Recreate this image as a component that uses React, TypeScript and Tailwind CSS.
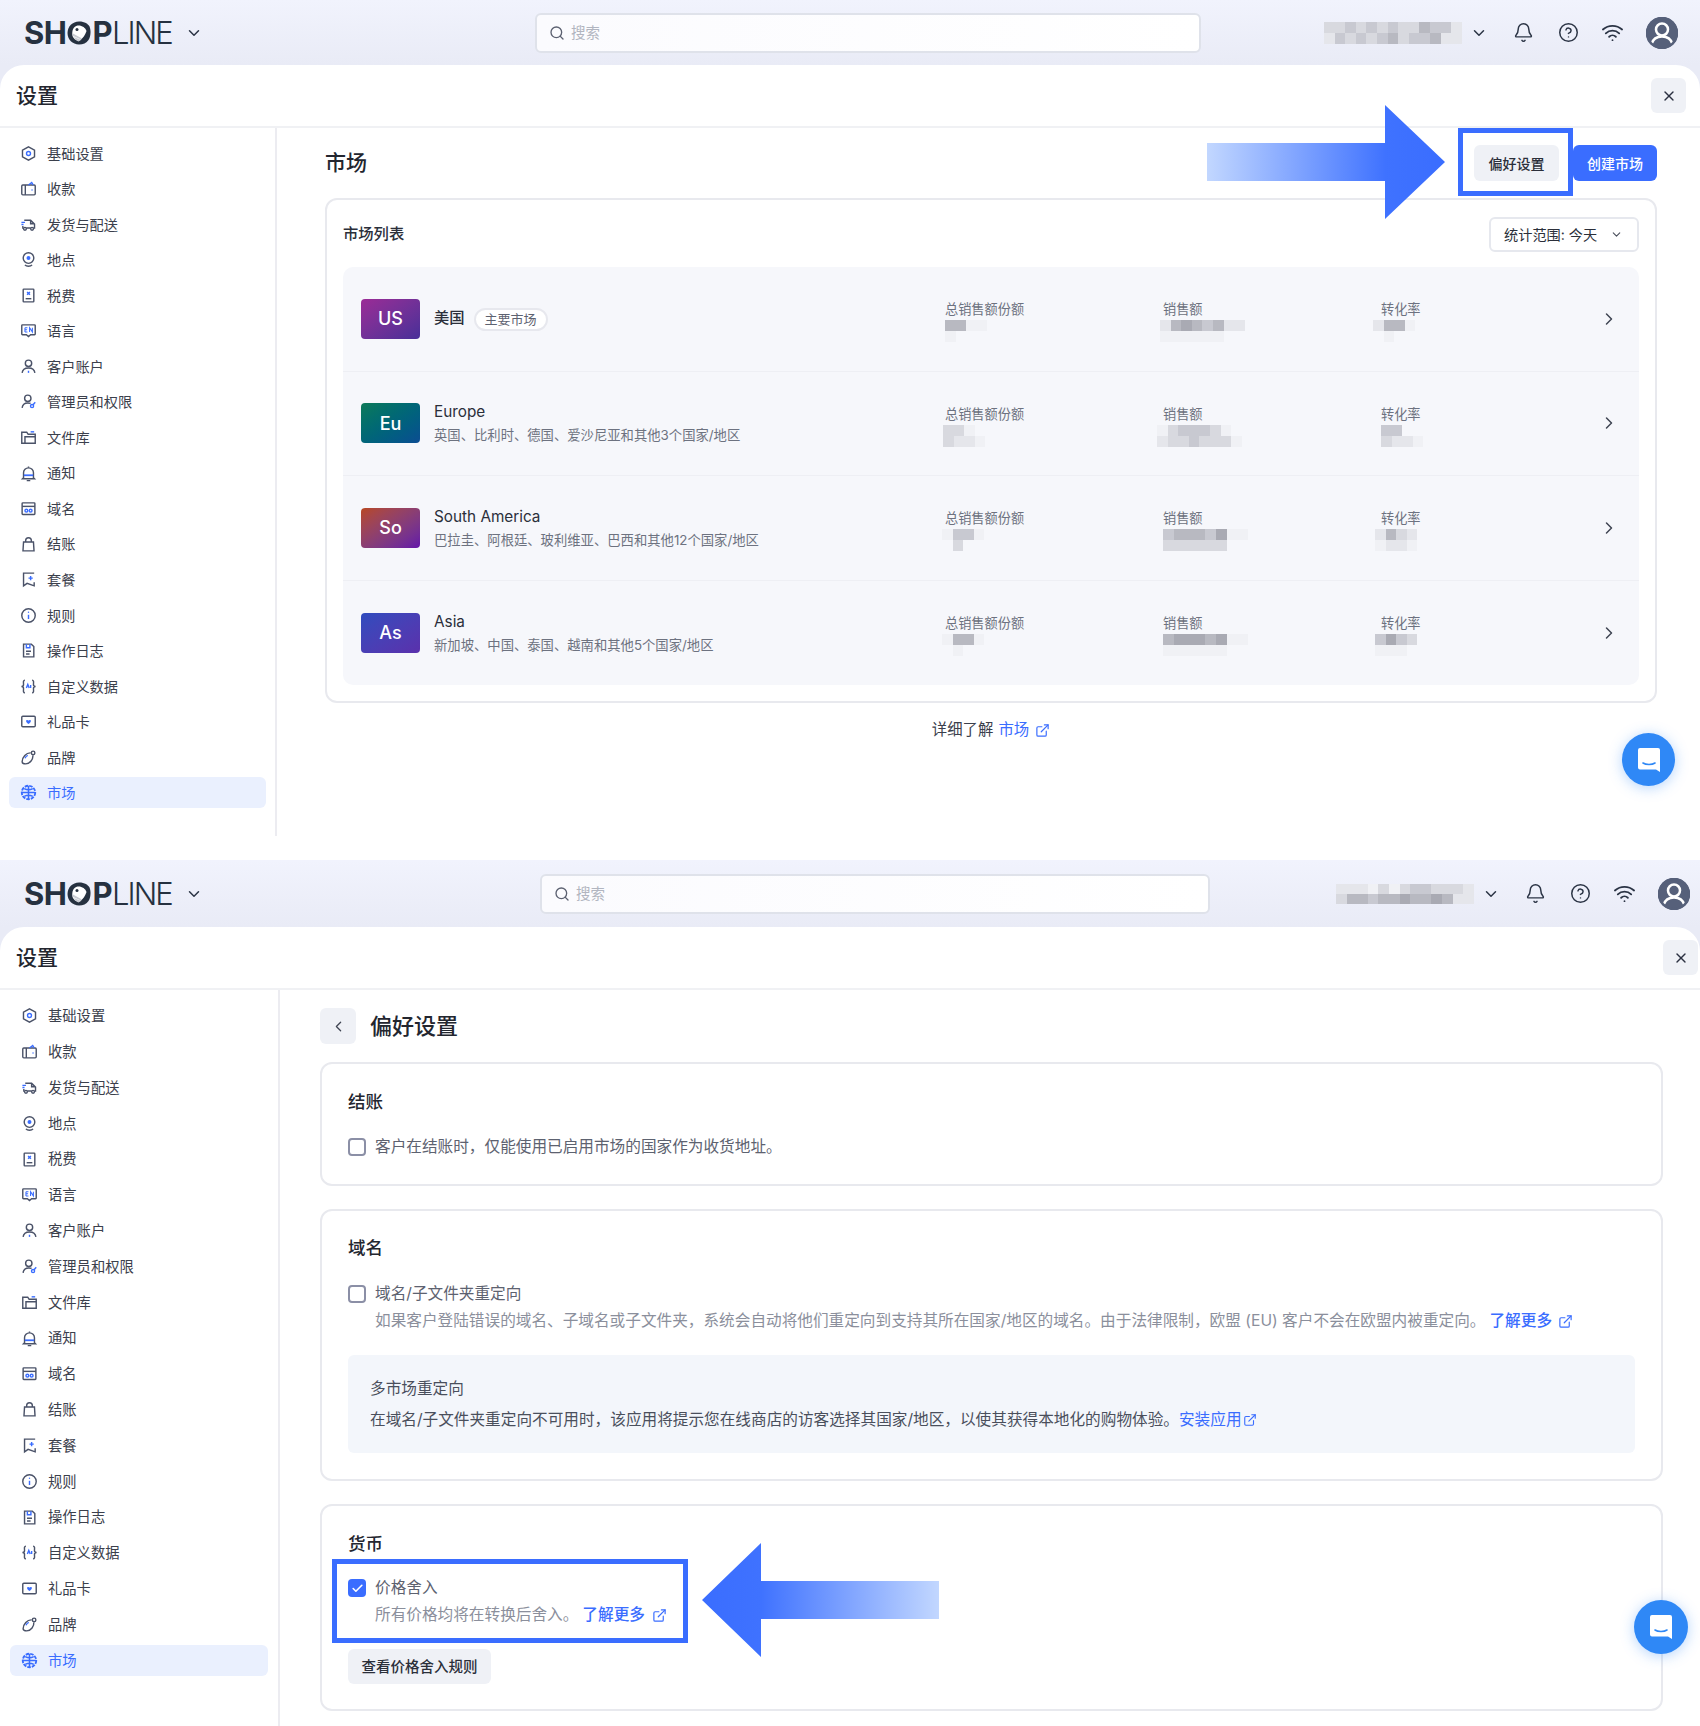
import type { ReactNode } from 'react'
import { Bell, Check, ChevronDown, ChevronLeft, ChevronRight, CircleHelp, ExternalLink, Search, Wifi, X } from 'lucide-react'

const INK = '#4a5268'
const BLUE = '#3a6dff'

const NAV_ICONS: Record<string, ReactNode> = {
  基础设置: (
    <>
      <path d="M12 2.5l8.5 4.8v9.4L12 21.5l-8.5-4.8V7.3z" stroke={INK} />
      <circle cx="12" cy="12" r="2.8" stroke={BLUE} />
    </>
  ),
  收款: (
    <>
      <rect x="2.5" y="7" width="19" height="14" rx="1.5" stroke={INK} />
      <path d="M7.5 7v14" stroke={INK} />
      <path d="M12 7l4.5-3.5L18.5 7" stroke={BLUE} />
      <circle cx="17" cy="14" r="1" fill={BLUE} />
    </>
  ),
  发货与配送: (
    <>
      <path d="M6 6h9l5.5 5.5V17H19M5 17H4v-3M15 6v5h5.5M9 17h6" stroke={INK} />
      <circle cx="7" cy="18" r="2" stroke={INK} />
      <circle cx="17" cy="18" r="2" stroke={INK} />
      <path d="M2 9h5M2 12h3" stroke={BLUE} />
    </>
  ),
  地点: (
    <>
      <circle cx="12" cy="10" r="7.5" stroke={INK} />
      <circle cx="12" cy="10" r="2.8" fill={BLUE} />
      <path d="M7 19.5c2 2.6 8 2.6 10 0" stroke={INK} />
    </>
  ),
  税费: (
    <>
      <rect x="4.5" y="3" width="15" height="18" rx="1" stroke={INK} />
      <path d="M10 7l4 4M14 7l-4 4" stroke={BLUE} />
      <path d="M8 16.5h8" stroke={INK} />
    </>
  ),
  语言: (
    <>
      <path d="M3.5 4h17a1 1 0 0 1 1 1v12a1 1 0 0 1-1 1H15l-3 2.5L9 18H3.5a1 1 0 0 1-1-1V5a1 1 0 0 1 1-1z" stroke={INK} />
      <path d="M7 8v6M7 8h3.5M7 11h3M7 14h3.5M13.5 14V8l4 6V8" stroke={BLUE} strokeWidth="1.5" />
    </>
  ),
  客户账户: (
    <>
      <circle cx="12" cy="7.5" r="4.5" stroke={INK} />
      <path d="M3 21c.5-5 4.5-7 9-7s8.5 2 9 7" stroke={INK} />
      <path d="M12 18v3" stroke={BLUE} />
    </>
  ),
  管理员和权限: (
    <>
      <circle cx="11" cy="7.5" r="4.5" stroke={INK} />
      <path d="M3 21c.5-5 4-7 8-7 1.5 0 3 .3 4 .8" stroke={INK} />
      <circle cx="17" cy="18.5" r="2.2" stroke={BLUE} />
      <path d="M18.5 16.5l3-3.5" stroke={BLUE} />
    </>
  ),
  文件库: (
    <>
      <path d="M2.5 20V4.5h7l2 3h10V20z" stroke={INK} />
      <path d="M7 20v-9h14.5" stroke={INK} />
      <path d="M15 4h5" stroke={BLUE} />
    </>
  ),
  通知: (
    <>
      <path d="M5 18V11a7 7 0 0 1 14 0v7l1.5 1.5h-17z" stroke={INK} />
      <path d="M12 2v2M9.5 22h5" stroke={INK} />
      <path d="M5.5 14.5h13" stroke={BLUE} strokeWidth="2.5" />
    </>
  ),
  域名: (
    <>
      <rect x="3" y="4" width="18" height="16.5" rx="1" stroke={INK} />
      <path d="M3 9h18" stroke={INK} />
      <circle cx="9" cy="15" r="2" stroke={BLUE} />
      <circle cx="15" cy="15" r="2" stroke={BLUE} />
    </>
  ),
  结账: <path d="M5 8.5h14l.8 12.5H4.2zM8 8.5V6.5a4 4 0 0 1 8 0v2" stroke={INK} />,
  套餐: (
    <>
      <path d="M20 3H5v18l5-3.5L20 21v-5" stroke={INK} />
      <path d="M15 7v6M12 10h6" stroke={BLUE} />
    </>
  ),
  规则: (
    <>
      <circle cx="12" cy="12" r="9.5" stroke={INK} />
      <path d="M12 11v6" stroke={BLUE} />
      <circle cx="12" cy="7.5" r="1" fill={BLUE} />
    </>
  ),
  操作日志: (
    <>
      <path d="M5 3h11l3.5 3.5V21H5z" stroke={INK} />
      <path d="M8.5 13h7M8.5 17h5" stroke={INK} />
      <path d="M9 3v5h5V3" stroke={BLUE} />
    </>
  ),
  自定义数据: (
    <>
      <path d="M7 3c-3 0-2 4-2 6s-1.5 3-3 3c1.5 0 3 1 3 3s-1 6 2 6M17 3c3 0 2 4 2 6s1.5 3 3 3c-1.5 0-3 1-3 3s1 6-2 6" stroke={INK} />
      <path d="M9 14l2-5 2 5M15 10v4" stroke={BLUE} />
    </>
  ),
  礼品卡: (
    <>
      <rect x="2.5" y="4.5" width="19" height="15" rx="1.5" stroke={INK} />
      <path d="M12 15.5c-5-3-3.5-6-1.5-5.5.7.2 1.5 1 1.5 1s.8-.8 1.5-1c2-.5 3.5 2.5-1.5 5.5z" fill={BLUE} />
    </>
  ),
  品牌: (
    <>
      <path d="M15 5.5C9 5 3 12 3 18c0 3 3 3 5 3 6 0 11-7 10-12" stroke={INK} />
      <circle cx="18.5" cy="5.5" r="2.5" stroke={INK} />
      <path d="M7 13c1-2 2.5-3.5 4-4" stroke={BLUE} />
    </>
  ),
  市场: (
    <>
      <circle cx="12" cy="12" r="9.5" stroke={BLUE} strokeWidth="2.6" strokeDasharray="5 1.5" />
      <path d="M2.5 12h19M12 2.5v19M6 6.5c3.5 2 8.5 2 12 0M6 17.5c3.5-2 8.5-2 12 0" stroke={BLUE} strokeWidth="2.2" />
    </>
  ),
}

const NAV_ITEMS = Object.keys(NAV_ICONS)

const TONES: Record<string, string> = {
  '0': 'transparent',
  '1': '#f0f1f5',
  '2': '#e5e6eb',
  '3': '#d8d9df',
  '4': '#c8c9d1',
  '5': '#b8b9c1',
  '6': '#a9aab3',
}

// pixelated (redacted) figures in the picture
function Mosaic({ rows, cellW = 10.6, cellH = 10.6, offset = 0 }: { rows: string[]; cellW?: number; cellH?: number; offset?: number }) {
  return (
    <div className="flex flex-col" style={{ marginLeft: offset }}>
      {rows.map((row, r) => (
        <div key={r} className="flex">
          {row.split('').map((tone, c) => (
            <div key={c} style={{ width: cellW, height: cellH, backgroundColor: TONES[tone] }} />
          ))}
        </div>
      ))}
    </div>
  )
}

function Logo() {
  return (
    <div className="flex items-center text-[31px] leading-none text-[#263140] font-['Inter',sans-serif]">
      <span className="font-bold tracking-[-0.5px]">SH</span>
      <svg viewBox="0 0 24 24" className="mx-[1px] h-[24px] w-[24px] shrink-0">
        <path d="M12 0.5C18 0.5 21 3 22.5 5.5 24 9 24 15 21.5 19 19.5 22 16 23.5 12 23.5 5.5 23.5.5 18.5.5 12S5.5.5 12 .5z" fill="#263140" />
        <path d="M5.5 15c-1-5 1-10 5-10.5 4-.5 8 2 9 5.5-1 3.5-4 8.5-8 10-3-.5-5-2.5-6-5z" fill="#ffffff" />
        <path d="M7 16l7 3-2.5 1.5c-2-.5-3.5-2.5-4.5-4.5zM6 12.5l9 5-1 1-8-3.5z" fill="#c9ccd3" />
        <circle cx="10" cy="8.5" r="1.5" fill="#263140" />
      </svg>
      <span className="font-bold tracking-[-0.5px]">P</span>
      <span className="font-light tracking-[-2px]">LINE</span>
    </div>
  )
}

function Avatar() {
  return (
    <svg viewBox="0 0 32 32" className="h-[32px] w-[32px] shrink-0">
      <circle cx="16" cy="16" r="16" fill="#56607a" />
      <circle cx="16" cy="12.5" r="6" fill="none" stroke="#ffffff" strokeWidth="2.5" />
      <path d="M5.5 27c1.5-5 5-7.5 10.5-7.5S25 22 26.5 27" fill="#56607a" stroke="#ffffff" strokeWidth="2.5" />
      <circle cx="16" cy="16" r="15" fill="none" stroke="#56607a" strokeWidth="2.5" />
    </svg>
  )
}

function ChatBubble() {
  return (
    <svg viewBox="0 0 28 28" className="h-[28px] w-[28px]">
      <path d="M5 2h18a2 2 0 0 1 2 2v22l-4-2.5H5a2 2 0 0 1-2-2V4a2 2 0 0 1 2-2z" fill="#ffffff" />
      <path d="M8 17c3 2 9 2 12 0" fill="none" stroke="#2f88f6" strokeWidth="1.6" strokeLinecap="round" />
    </svg>
  )
}

function ExternalIcon({ size = 15 }: { size?: number }) {
  return <ExternalLink size={size} strokeWidth={1.9} className="inline-block shrink-0 text-[#3a6dff]" />
}

function Sidebar({ width, rowH, itemCls, textCls }: { width: string; rowH: string; itemCls: string; textCls: string }) {
  return (
    <nav className={`${width} shrink-0 border-r-2 border-[#ececf1]`}>
      {NAV_ITEMS.map((name) => {
        const active = name === '市场'
        return (
          <div key={name} className={`${rowH} flex items-center`}>
            <div className={`${itemCls} flex h-[31px] items-center gap-[10px] rounded-[6px] ${active ? 'bg-[#eaf0fe] text-[#3a6dff]' : 'text-[#3b404c]'}`}>
              <svg viewBox="0 0 24 24" fill="none" strokeWidth="2" className="h-[17px] w-[17px] shrink-0">
                {NAV_ICONS[name]}
              </svg>
              <span className={textCls}>{name}</span>
            </div>
          </div>
        )
      })}
    </nav>
  )
}

function Frame({
  height,
  headerH,
  search,
  mosaicGap,
  chevGap,
  mosaic,
  mosaicH,
  closePr,
  logoW,
  sidebar,
  children,
}: {
  height: string
  headerH: string
  search: string
  mosaicGap: string
  chevGap: string
  mosaic: string[]
  mosaicH: number
  closePr: string
  logoW: string
  sidebar: ReactNode
  children: ReactNode
}) {
  return (
    <section className={`${height} overflow-hidden bg-[#e9ebf6]`}>
      <header className={`${headerH} flex items-center bg-linear-to-b from-[#f1f3fd] to-[#e9ebf6]`}>
        <div className={`${logoW} flex shrink-0 items-center pl-[24px]`}>
          <Logo />
          <ChevronDown size={18} strokeWidth={2} className="ml-[13px] text-[#2b3445]" />
        </div>
        <div className={`${search} flex h-[40px] shrink-0 items-center gap-[6px] rounded-[6px] border-2 border-[#dfe2ea] bg-linear-to-r from-[#fbfbfe] to-white pl-[12px] text-[14.5px] text-[#b1b5c0]`}>
          <Search size={16} strokeWidth={2} className="text-[#5b6070]" />
          搜索
        </div>
        <div className={mosaicGap}>
          <Mosaic rows={mosaic} cellH={mosaicH} />
        </div>
        <ChevronDown size={18} strokeWidth={2} className={`${chevGap} shrink-0 text-[#2b3445]`} />
        <Bell size={21} strokeWidth={1.7} className="ml-[25px] shrink-0 text-[#2b3445]" />
        <CircleHelp size={21} strokeWidth={1.7} className="ml-[24px] shrink-0 text-[#2b3445]" />
        <Wifi size={23} strokeWidth={1.9} className="ml-[22px] shrink-0 text-[#2b3445]" />
        <div className="ml-[22px]">
          <Avatar />
        </div>
      </header>
      <div className="h-full rounded-t-[24px] bg-white">
        <div className={`flex h-[63px] items-center justify-between border-b-2 border-[#f0f1f4] pl-[16px] ${closePr}`}>
          <h1 className="text-[21px] font-medium text-[#23262f]">设置</h1>
          <button className="flex h-[35px] w-[35px] items-center justify-center rounded-[6px] bg-[#eff1f6] text-[#2b3040]">
            <X size={16} strokeWidth={2} />
          </button>
        </div>
        <div className="flex h-full">
          {sidebar}
          {children}
        </div>
      </div>
    </section>
  )
}

const MARKETS = [
  {
    code: 'US',
    grad: 'from-[#9b2a96] to-[#482e98]',
    name: '美国',
    desc: '',
    m: [
      { rows: ['5511', '1000'], offset: 0 },
      { rows: ['25654522', '11111100'], offset: -3 },
      { rows: ['25510', '01000'], offset: -8 },
    ],
  },
  {
    code: 'Eu',
    grad: 'from-[#0f7a58] to-[#0d4c92]',
    name: 'Europe',
    desc: '英国、比利时、德国、爱沙尼亚和其他3个国家/地区',
    m: [
      { rows: ['3310', '3221'], offset: -2 },
      { rows: ['13444310', '23343331'], offset: -6 },
      { rows: ['44', '3221'], offset: 0 },
    ],
  },
  {
    code: 'So',
    grad: 'from-[#b8471c] to-[#650fa9]',
    name: 'South America',
    desc: '巴拉圭、阿根廷、玻利维亚、巴西和其他12个国家/地区',
    m: [
      { rows: ['1441', '0300'], offset: -3 },
      { rows: ['45554611', '33333300'], offset: 0 },
      { rows: ['2532', '1221'], offset: -6 },
    ],
  },
  {
    code: 'As',
    grad: 'from-[#2e4cbe] to-[#5a30ac]',
    name: 'Asia',
    desc: '新加坡、中国、泰国、越南和其他5个国家/地区',
    m: [
      { rows: ['1551', '0100'], offset: -3 },
      { rows: ['56665611', '11111100'], offset: 0 },
      { rows: ['4643', '1110'], offset: -6 },
    ],
  },
]

const METRIC_LABELS = ['总销售额份额', '销售额', '转化率']

function MarketRow({ market }: { market: (typeof MARKETS)[number] }) {
  return (
    <div className="flex h-[104.5px] items-stretch border-b border-[#eeeff4] pl-[18px] last:border-b-0">
      <div className="flex w-[584px] shrink-0 items-center gap-[14px]">
        <div className={`flex h-[40px] w-[59px] items-center justify-center rounded-[4px] bg-linear-to-br ${market.grad} text-[18px] font-medium text-white`}>
          {market.code}
        </div>
        {market.desc ? (
          <div>
            <div className="text-[15.3px] leading-[22px] text-[#2b2f3a]">{market.name}</div>
            <div className="mt-[2px] text-[13.33px] leading-[20px] text-[#6d7280]">{market.desc}</div>
          </div>
        ) : (
          <div className="flex items-center gap-[9px]">
            <span className="text-[15.3px] font-medium text-[#2b2f3a]">{market.name}</span>
            <span className="translate-y-[1px] rounded-full border-2 border-[#e7e8ee] bg-white px-[9px] text-[13px] leading-[19px] text-[#5d6270]">主要市场</span>
          </div>
        )}
      </div>
      {METRIC_LABELS.map((label, i) => (
        <div key={label} className="w-[218px] shrink-0 pt-[32px]">
          <div className="text-[13.2px] leading-[20px] text-[#6d7280]">{label}</div>
          <div className="mt-[1px]">
            <Mosaic rows={market.m[i].rows} cellH={11} offset={market.m[i].offset} />
          </div>
        </div>
      ))}
      <div className="flex flex-1 items-center justify-center">
        <ChevronRight size={20} strokeWidth={1.8} className="-translate-x-[10px] text-[#3f4452]" />
      </div>
    </div>
  )
}

function MarketsPage() {
  return (
    <main className="flex-1 pr-[43px] pl-[48px]">
      <div className="flex h-[70px] items-center justify-between">
        <h2 className="text-[21px] font-medium text-[#23262f]">市场</h2>
        <div className="flex gap-[14px]">
          <button className="h-[36px] w-[85px] rounded-[6px] bg-[#eff1f6] text-[14px] font-medium text-[#2b2f3a]">偏好设置</button>
          <button className="h-[36px] w-[84px] rounded-[6px] bg-[#3a6dff] text-[14px] font-medium text-white">创建市场</button>
        </div>
      </div>
      <div className="rounded-[12px] border-2 border-[#e8e9ee] px-[16px] pt-[17px] pb-[16px]">
        <div className="mb-[15px] flex h-[35px] items-center justify-between">
          <span className="text-[15.3px] font-medium text-[#2b2f3a]">市场列表</span>
          <div className="flex h-[35px] w-[150px] items-center justify-between rounded-[6px] border-2 border-[#e6e8ee] pr-[14px] pl-[13px] text-[14.2px] text-[#2b2f3a]">
            统计范围: 今天
            <ChevronDown size={13} strokeWidth={2} className="text-[#4a4f5c]" />
          </div>
        </div>
        <div className="overflow-hidden rounded-[10px] bg-[#f6f7fb]">
          {MARKETS.map((market) => (
            <MarketRow key={market.code} market={market} />
          ))}
        </div>
      </div>
      <div className="mt-[17px] flex items-center justify-center gap-[5px] text-[15.4px] leading-[20px] text-[#3b404c]">
        详细了解
        <span className="text-[#3a6dff]">市场</span>
        <span className="ml-[1px] flex">
          <ExternalIcon />
        </span>
      </div>
    </main>
  )
}

function Box({ checked = false }: { checked?: boolean }) {
  return checked ? (
    <span className="flex h-[18px] w-[18px] shrink-0 items-center justify-center rounded-[4px] bg-[#3a6dff] text-white">
      <Check size={13} strokeWidth={3} />
    </span>
  ) : (
    <span className="h-[18px] w-[18px] shrink-0 rounded-[4px] border-2 border-[#8b8fa6] bg-white" />
  )
}

function PrefRow({ checked, label }: { checked?: boolean; label: string }) {
  return (
    <div className="flex h-[22px] items-center gap-[9px]">
      <Box checked={checked} />
      <span className="text-[15.65px] leading-[22px] text-[#5d6270]">{label}</span>
    </div>
  )
}

function PrefCard({ title, children, className }: { title: string; children: ReactNode; className: string }) {
  return (
    <div className={`rounded-[12px] border-2 border-[#e8e9ee] px-[26px] ${className}`}>
      <h3 className="text-[17.5px] leading-[24px] font-medium text-[#23262f]">{title}</h3>
      {children}
    </div>
  )
}

function PreferencesPage() {
  return (
    <main className="flex-1 pr-[37px] pl-[40px]">
      <div className="flex h-[72px] items-center gap-[14px]">
        <button className="flex h-[36px] w-[36px] items-center justify-center rounded-[6px] bg-[#eff1f6] text-[#3f4452]">
          <ChevronLeft size={17} strokeWidth={1.8} />
        </button>
        <h2 className="text-[22px] font-medium text-[#23262f]">偏好设置</h2>
      </div>
      <div className="flex flex-col gap-[23px]">
        <PrefCard title="结账" className="pt-[26px] pb-[26px]">
          <div className="mt-[22px]">
            <PrefRow label="客户在结账时，仅能使用已启用市场的国家作为收货地址。" />
          </div>
        </PrefCard>
        <PrefCard title="域名" className="pt-[25px] pb-[26px]">
          <div className="mt-[23px]">
            <PrefRow label="域名/子文件夹重定向" />
          </div>
          <p className="mt-[5px] ml-[27px] flex items-center text-[15.65px] leading-[22px] whitespace-nowrap text-[#8b8f9c]">
            如果客户登陆错误的域名、子域名或子文件夹，系统会自动将他们重定向到支持其所在国家/地区的域名。由于法律限制，欧盟 (EU) 客户不会在欧盟内被重定向。
            <span className="ml-[4px] font-medium text-[#3a6dff]">了解更多</span>
            <span className="ml-[6px] flex">
              <ExternalIcon />
            </span>
          </p>
          <div className="mt-[23px] h-[98px] rounded-[6px] bg-[#f3f6fb] px-[22px] pt-[23px]">
            <div className="text-[15.65px] leading-[22px] text-[#4a4f5c]">多市场重定向</div>
            <p className="mt-[9px] flex items-center text-[15.65px] leading-[22px] whitespace-nowrap text-[#4a4f5c]">
              在域名/子文件夹重定向不可用时，该应用将提示您在线商店的访客选择其国家/地区，以使其获得本地化的购物体验。
              <span className="text-[#3a6dff]">安装应用</span>
              <span className="ml-[1px] flex">
                <ExternalIcon size={14} />
              </span>
            </p>
          </div>
        </PrefCard>
        <PrefCard title="货币" className="pt-[26px] pb-[25px]">
          <div className="mt-[21px]">
            <PrefRow checked label="价格舍入" />
          </div>
          <p className="mt-[5px] ml-[27px] flex items-center text-[15.65px] leading-[22px] text-[#8b8f9c]">
            所有价格均将在转换后舍入。
            <span className="ml-[4px] font-medium text-[#3a6dff]">了解更多</span>
            <span className="ml-[7px] flex">
              <ExternalIcon />
            </span>
          </p>
          <button className="mt-[23px] h-[35px] w-[143px] rounded-[6px] bg-[#eff1f6] text-[14.5px] font-medium text-[#2b2f3a]">查看价格舍入规则</button>
        </PrefCard>
      </div>
    </main>
  )
}

function Callout({ className }: { className: string }) {
  return <div className={`pointer-events-none absolute border-[5px] border-[#3a6dff] ${className}`} />
}

function ChatButton({ className }: { className: string }) {
  return (
    <div className={`absolute flex items-center justify-center rounded-full bg-[#2f88f6] shadow-[0_2px_14px_rgba(47,136,246,0.35)] ${className}`}>
      <ChatBubble />
    </div>
  )
}

export default function App() {
  return (
    <div className="relative h-[1726px] w-[1700px] overflow-hidden bg-white font-['Inter','Noto_Sans_CJK_SC',sans-serif]">
      <Frame
        height="h-[836px]"
        headerH="h-[65px]"
        logoW="w-[535px]"
        search="w-[666px]"
        mosaicGap="ml-[123px]"
        chevGap="ml-[8px]"
        mosaic={['3343434335442', '2434345344522']}
        mosaicH={11}
        closePr="pr-[14px]"
        sidebar={<Sidebar width="w-[277px] pt-[7.5px]" rowH="h-[35.54px]" itemCls="mx-[9px] w-[257px] pl-[11px]" textCls="text-[14.2px]" />}
      >
        <MarketsPage />
      </Frame>
      <div className="h-[24px]" />
      <Frame
        height="h-[866px]"
        headerH="h-[67px]"
        logoW="w-[540px]"
        search="w-[670px]"
        mosaicGap="ml-[126px]"
        chevGap="ml-[8px]"
        mosaic={['2221313443332', '3554556556522']}
        mosaicH={10}
        closePr="pr-[2px]"
        sidebar={<Sidebar width="w-[280px] pt-[8px]" rowH="h-[35.8px]" itemCls="mx-[10px] w-[259px] pl-[11px]" textCls="text-[14.3px]" />}
      >
        <PreferencesPage />
      </Frame>

      {/* annotations drawn over the two screenshots */}
      <Callout className="top-[128px] left-[1458px] h-[68px] w-[115px]" />
      <svg viewBox="0 0 238 114" className="absolute top-[105px] left-[1207px] h-[114px] w-[238px] blur-[0.6px]">
        <defs>
          <linearGradient id="arrowRight" x1="0" x2="1" y1="0" y2="0">
            <stop offset="0" stopColor="#c2d7ff" />
            <stop offset="0.75" stopColor="#3f72ff" />
            <stop offset="1" stopColor="#3a6dff" />
          </linearGradient>
        </defs>
        <path d="M0 38h178V0l60 57-60 57V76H0z" fill="url(#arrowRight)" />
      </svg>
      <Callout className="top-[1559px] left-[332px] h-[84px] w-[356px]" />
      <svg viewBox="0 0 237 114" className="absolute top-[1543px] left-[702px] h-[114px] w-[237px] blur-[0.6px]">
        <defs>
          <linearGradient id="arrowLeft" x1="1" x2="0" y1="0" y2="0">
            <stop offset="0" stopColor="#c2d7ff" />
            <stop offset="0.75" stopColor="#3f72ff" />
            <stop offset="1" stopColor="#3a6dff" />
          </linearGradient>
        </defs>
        <path d="M237 38H59V0L0 57l59 57V76h178z" fill="url(#arrowLeft)" />
      </svg>
      <ChatButton className="top-[733px] left-[1622px] h-[53px] w-[53px]" />
      <ChatButton className="top-[1600px] left-[1634px] h-[54px] w-[54px]" />
    </div>
  )
}
